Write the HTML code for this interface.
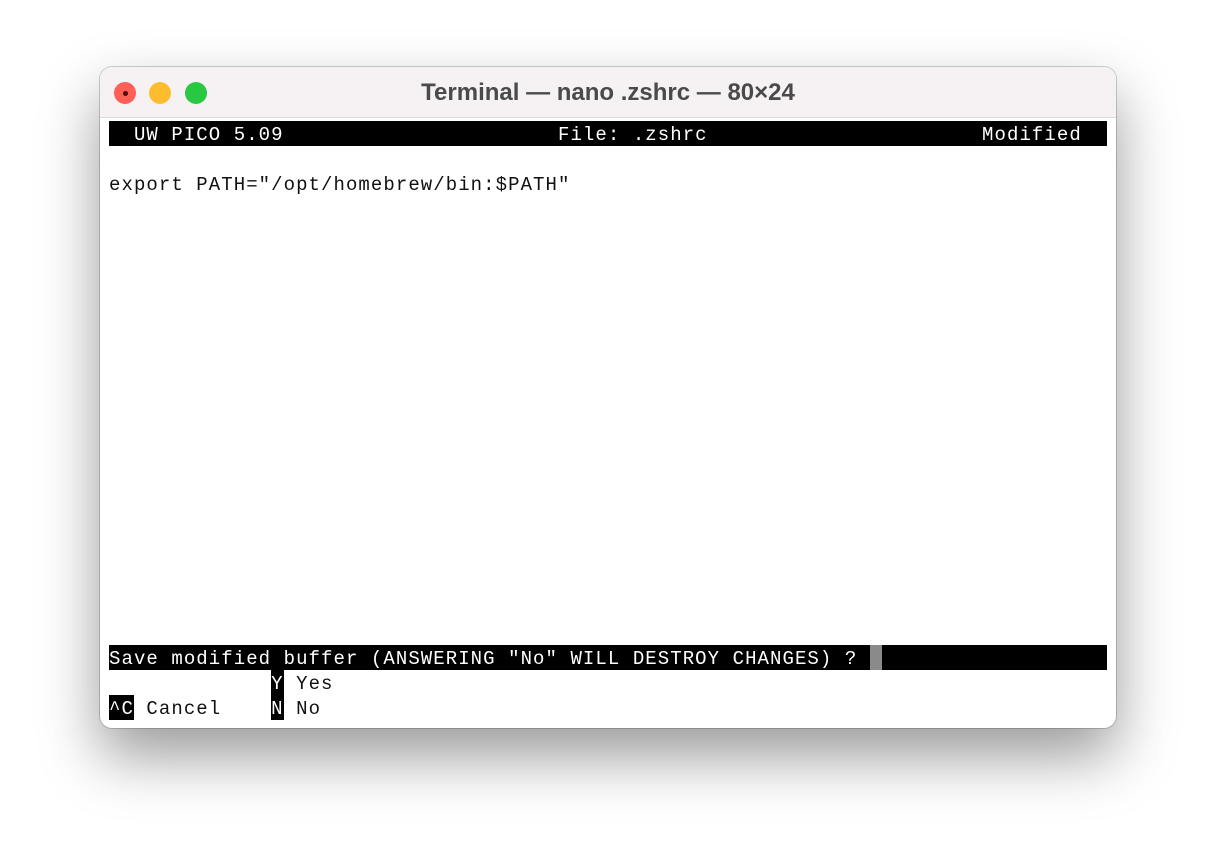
<!DOCTYPE html>
<html><head><meta charset="utf-8"><style>
html,body{margin:0;padding:0;background:#fff;width:1216px;height:861px;overflow:hidden;position:relative}
.win{position:absolute;left:100px;top:67px;width:1016px;height:661px;border-radius:12px;background:#fff;box-shadow:0 28px 60px rgba(0,0,0,.4),0 0 0 1px rgba(0,0,0,.18);overflow:hidden}
.tb{position:absolute;left:0;top:0;width:100%;height:50px;background:#f6f2f4;border-bottom:1px solid #dcdcdc}
.dot{position:absolute;top:15px;width:22px;height:22px;border-radius:50%}
.title{position:absolute;left:0;width:100%;top:12px;text-align:center;font:bold 24px "Liberation Sans",sans-serif;color:#4a4a4a}
.row{position:absolute;left:109px;height:25px;line-height:29px;font-family:"Liberation Mono",monospace;font-size:19px;letter-spacing:1.07px;white-space:pre;color:#111;overflow:hidden}
.inv{background:#000;color:#fff}
.row span.inv{display:inline-block;height:25px;vertical-align:top;line-height:29px}
</style></head><body>
<div class="win">
<div class="tb">
<div class="dot" style="left:14px;background:#fe5f57"></div>
<div style="position:absolute;left:23px;top:24px;width:5px;height:5px;border-radius:50%;background:#4a0c08"></div>
<div class="dot" style="left:49px;background:#febc2e"></div>
<div class="dot" style="left:85px;background:#28c840"></div>
<div class="title">Terminal — nano .zshrc — 80×24</div>
</div>
</div>
<div class="row inv" style="top:121px;width:998px">  UW PICO 5.09                      File: .zshrc                      Modified</div>
<div class="row" style="top:171px">export PATH="/opt/homebrew/bin:$PATH"</div>
<div class="row inv" style="top:645px;width:998px">Save modified buffer (ANSWERING "No" WILL DESTROY CHANGES) ? </div>
<div style="position:absolute;left:870px;top:645px;width:12px;height:25px;background:#8a8a8a"></div>
<div class="row" style="top:670px">             <span class="inv">Y</span> Yes</div>
<div class="row" style="top:695px"><span class="inv">^C</span> Cancel    <span class="inv">N</span> No</div>
</body></html>
